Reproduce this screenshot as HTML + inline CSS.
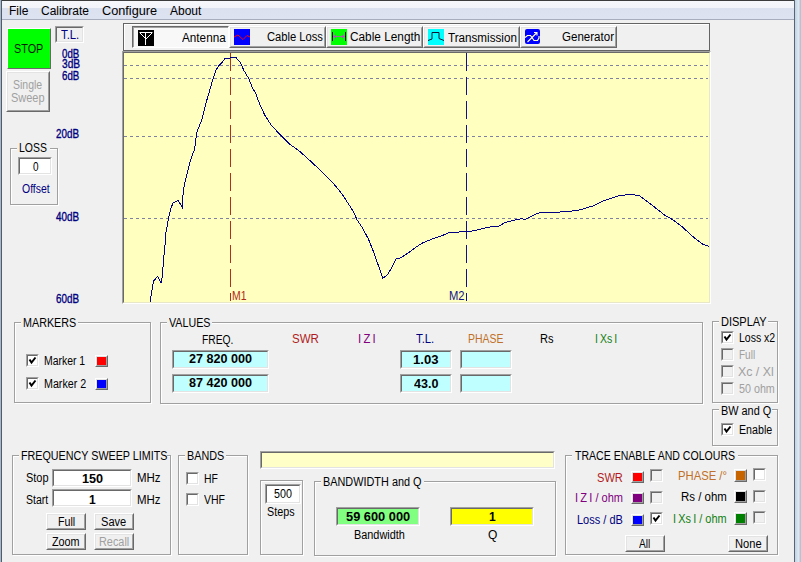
<!DOCTYPE html>
<html><head><meta charset="utf-8"><style>
html,body{margin:0;padding:0;}
body{width:801px;height:562px;overflow:hidden;background:#f0f0f0;position:relative;font-family:"Liberation Sans",sans-serif;font-size:11px;color:#000;}
.a{position:absolute;}
.t{position:absolute;white-space:nowrap;line-height:20px;height:20px;transform-origin:0 0;}
.grp{position:absolute;border:1px solid #a0a0a0;box-shadow:inset 1px 1px 0 #fff,1px 1px 0 #fff;box-sizing:border-box;}
.gb{position:absolute;background:#f0f0f0;height:3px;}
.sunk{position:absolute;box-sizing:border-box;border-top:1px solid #a0a0a0;border-left:1px solid #a0a0a0;border-right:1px solid #fff;border-bottom:1px solid #fff;}
.sunk>div{position:absolute;left:0;top:0;right:0;bottom:0;border-top:1px solid #696969;border-left:1px solid #696969;border-right:1px solid #e3e3e3;border-bottom:1px solid #e3e3e3;}
.btn{position:absolute;box-sizing:border-box;border-top:1px solid #fff;border-left:1px solid #fff;border-right:1px solid #696969;border-bottom:1px solid #696969;background:#f0f0f0;}
.btn>div{position:absolute;left:0;top:0;right:0;bottom:0;border-right:1px solid #a0a0a0;border-bottom:1px solid #a0a0a0;border-top:1px solid #e3e3e3;border-left:1px solid #e3e3e3;}
.cb{position:absolute;width:13px;height:13px;box-sizing:border-box;border-top:1px solid #a0a0a0;border-left:1px solid #a0a0a0;border-right:1px solid #fff;border-bottom:1px solid #fff;}
.cb>div{position:absolute;left:0;top:0;right:0;bottom:0;border-top:1px solid #696969;border-left:1px solid #696969;border-right:1px solid #e3e3e3;border-bottom:1px solid #e3e3e3;background:#fff;}
.cb.dis>div{background:#f0f0f0;}
.sw{position:absolute;width:13px;height:13px;box-sizing:border-box;border-top:1px solid #fff;border-left:1px solid #fff;border-right:1px solid #696969;border-bottom:1px solid #696969;}
.sw>div{position:absolute;left:0;top:0;right:0;bottom:0;border-right:1px solid #a0a0a0;border-bottom:1px solid #a0a0a0;border-top:1px solid #e3e3e3;border-left:1px solid #e3e3e3;}
</style></head><body>
<!-- window frame -->
<div class="a" style="left:0;top:0;width:801px;height:1px;background:#3c3c3c"></div>
<div class="a" style="left:0;top:0;width:1px;height:562px;background:#a8b8c8"></div>
<div class="a" style="left:1px;top:0;width:1px;height:562px;background:#505c6c"></div>
<div class="a" style="left:794px;top:0;width:1px;height:562px;background:#5a6470"></div>
<div class="a" style="left:795px;top:0;width:6px;height:562px;background:linear-gradient(90deg,#c0d4e4,#dce8f2 60%,#a8bccc)"></div>

<!-- menu bar -->
<div class="a" style="left:2px;top:1px;width:792px;height:18px;background:linear-gradient(#f6f7fb 0,#f2f4f9 7px,#dbe1ef 7px,#dde3f0 18px)"></div>
<div class="a" style="left:2px;top:19px;width:792px;height:1px;background:#a7adbd"></div>

<!-- left controls -->
<div class="a" style="left:7px;top:28px;width:44px;height:41px;box-sizing:border-box;background:#00ff00;border-top:1px solid #fff;border-left:1px solid #fff;border-right:1px solid #696969;border-bottom:1px solid #696969"></div>
<div class="btn" style="left:6px;top:71px;width:44px;height:41px"><div></div></div>
<div class="sunk" style="left:55px;top:26px;width:29px;height:17px"><div></div></div>

<div class="grp" style="left:10px;top:148px;width:48px;height:57px"></div>
<div class="gb" style="left:17px;top:147px;width:33px"></div>
<div class="sunk" style="left:18px;top:157px;width:34px;height:18px;background:#fff"><div></div></div>

<!-- toolbar -->
<div class="a" style="left:123px;top:23px;width:587px;height:28px;box-sizing:border-box;border:1px solid #646464;box-shadow:inset 1px 1px 0 #fff"></div>
<div class="a" style="left:132px;top:26px;width:97px;height:22px;box-sizing:border-box;border-top:1px solid #696969;border-left:1px solid #696969;border-right:1px solid #fff;border-bottom:1px solid #fff;background:#f8f8f8"><div class="a" style="left:0;top:0;right:0;bottom:0;border-top:1px solid #a0a0a0;border-left:1px solid #a0a0a0"></div></div>
<div class="a" style="left:138px;top:30px;width:16px;height:16px;background:#000"><svg width="16" height="16" style="position:absolute;left:0;top:0"><path d="M1.5 2.5H14.5M2 3L8 9M14 3L8 9M7.5 2.5V15" stroke="#fff" stroke-width="1" fill="none"/></svg></div>

<div class="btn" style="left:229px;top:26px;width:97px;height:22px"><div></div></div>
<div class="a" style="left:234px;top:29px;width:16px;height:16px;background:#0000ff"><svg width="16" height="16" style="position:absolute;left:0;top:0"><path d="M0 8L4 6L9 10.5L13 6.5L16 8" stroke="#ff0000" stroke-width="1" fill="none"/></svg></div>

<div class="btn" style="left:326px;top:26px;width:97px;height:22px"><div></div></div>
<div class="a" style="left:331px;top:29px;width:16px;height:16px;background:#00ff00"><svg width="16" height="16" style="position:absolute;left:0;top:0"><path d="M1.5 3V12M14.5 3V12" stroke="#000" stroke-width="1" fill="none"/><path d="M3 7.5H13" stroke="#a060a0" stroke-width="1"/><path d="M2 7.5L5 5.5V9.5Z M14 7.5L11 5.5V9.5Z" fill="#b050c0"/></svg></div>

<div class="btn" style="left:423px;top:26px;width:97px;height:22px"><div></div></div>
<div class="a" style="left:428px;top:29px;width:16px;height:16px;background:#00ffff"><svg width="16" height="16" style="position:absolute;left:0;top:0"><path d="M0 11.5L4 10V3.5H11V9.5L16 11.5" stroke="#101030" stroke-width="1" fill="none"/></svg></div>

<div class="btn" style="left:520px;top:26px;width:97px;height:22px"><div></div></div>
<div class="a" style="left:525px;top:29px;width:15px;height:15px;background:#0000ff;border-radius:2px"><svg width="16" height="16" style="position:absolute;left:0;top:0"><path d="M0 8.5L2.5 6.5H5.5L8 10L9 11.5H12.5L14 9V7" stroke="#ffffc0" stroke-width="1.2" fill="none"/><path d="M2.5 13L11.5 4M9 3.5H12V6.5" stroke="#ffffe0" stroke-width="1.1" fill="none"/></svg></div>

<!-- plot -->
<div class="a" style="left:122px;top:51px;width:589px;height:253px;box-sizing:border-box;border-top:1px solid #a0a0a0;border-left:1px solid #a0a0a0;border-right:1px solid #fff;border-bottom:1px solid #fff;">
 <div class="a" style="left:0;top:0;right:0;bottom:0;border-top:1px solid #696969;border-left:1px solid #696969;border-right:1px solid #e8e8c8;border-bottom:1px solid #e8e8c8;background:#ffffc0"></div>
</div>
<svg class="a" style="left:0;top:0" width="801" height="562">
 <g stroke="#8080a0" stroke-width="1" stroke-dasharray="3 3">
  <path d="M124 65.5H708M124 78.5H708M124 136.5H708M124 218.5H708"/>
 </g>
 <path d="M230.5 53V301" stroke="#b03020" stroke-width="1" stroke-dasharray="18 6"/>
 <path d="M466.5 53V301" stroke="#10108a" stroke-width="1" stroke-dasharray="18 6"/>
 <polyline fill="none" shape-rendering="crispEdges" stroke="#000080" stroke-width="1" points="150.2,301.8 151.1,295.4 152.1,289.7 153.5,281.2 157.8,276.2 161,283.3 162,278.4 162.8,269.8 163.5,259.9 164.9,247 165.6,235.7 166.3,230 166.7,229 168.5,218.3 170.6,209.4 172.9,203.2 178.3,200.5 182.3,207.3 183.2,191.6 184.1,186.3 185.9,178.3 188,170.2 190.7,159.6 192.5,154.2 194.5,150 196.6,133.6 198.4,128.3 202,119.4 206.4,101.6 209,92.7 212.6,80.2 216.2,69.6 219.3,65 221.9,62.6 225.1,58.3 230.5,58 235.8,57.3 240.6,62.8 243.8,70.3 248.7,78.5 252.2,87.4 255.8,93.6 259.4,103.4 264.7,115 270.9,124.7 281.6,136.3 286.9,141.6 290,144.4 298.9,150.7 306.9,157.8 319.4,169.4 332.7,182.7 341.6,193.4 353.2,211.2 356.7,219.2 362,227.2 368.3,238.8 373.1,250.7 378.5,265.8 382.9,278.3 387.4,274.7 391.8,267.6 396.3,258.7 400.7,257.8 408.7,252.5 415.8,247.2 423,242.7 431.9,239.1 437.2,237.4 444.3,234.7 449.7,232.4 466.7,231.7 474.5,230.6 487.9,227.2 499.2,226.1 504.4,222.7 514.9,220.1 520.9,218.7 525.4,219.3 535.9,214.2 538.9,213 556.9,212.7 562.7,211.4 576.5,210.8 592.5,206.1 603.1,200.8 620,195.5 630.7,194.4 639.2,195.5 647.7,201.8 664.6,215 673.1,219.9 681.6,226.3 694.4,237.9 702.9,244.3 708.8,246.4"/>
</svg>

<!-- MARKERS -->
<div class="grp" style="left:14px;top:322px;width:137px;height:81px"></div>
<div class="gb" style="left:21px;top:321px;width:57px"></div>
<div class="cb" style="left:26px;top:354px"><div></div></div>
<svg class="a" style="left:26px;top:354px" width="13" height="13"><path d="M3.5 5.5L5.5 8.5L9.5 3.5" stroke="#000" stroke-width="2" fill="none"/></svg>
<div class="sw" style="left:95px;top:355px;height:12px"><div style="background:#ff0000"></div></div>
<div class="cb" style="left:26px;top:377px"><div></div></div>
<svg class="a" style="left:26px;top:377px" width="13" height="13"><path d="M3.5 5.5L5.5 8.5L9.5 3.5" stroke="#000" stroke-width="2" fill="none"/></svg>
<div class="sw" style="left:95px;top:378px;height:12px"><div style="background:#0000ff"></div></div>

<!-- VALUES -->
<div class="grp" style="left:160px;top:322px;width:543px;height:82px"></div>
<div class="gb" style="left:167px;top:321px;width:45px"></div>
<div class="sunk" style="left:172px;top:350px;width:97px;height:19px;background:#c0ffff"><div></div></div>
<div class="sunk" style="left:172px;top:374px;width:97px;height:19px;background:#c0ffff"><div></div></div>
<div class="sunk" style="left:400px;top:350px;width:52px;height:19px;background:#c0ffff"><div></div></div>
<div class="sunk" style="left:400px;top:374px;width:52px;height:19px;background:#c0ffff"><div></div></div>
<div class="sunk" style="left:460px;top:350px;width:52px;height:19px;background:#c0ffff"><div></div></div>
<div class="sunk" style="left:460px;top:374px;width:52px;height:19px;background:#c0ffff"><div></div></div>

<!-- DISPLAY -->
<div class="grp" style="left:712px;top:321px;width:66px;height:82px"></div>
<div class="gb" style="left:719px;top:320px;width:49px"></div>
<div class="cb" style="left:721px;top:331px"><div></div></div>
<svg class="a" style="left:721px;top:331px" width="13" height="13"><path d="M3.5 5.5L5.5 8.5L9.5 3.5" stroke="#000" stroke-width="2" fill="none"/></svg>
<div class="cb dis" style="left:721px;top:348px"><div></div></div>
<div class="cb dis" style="left:721px;top:365px"><div></div></div>
<div class="cb dis" style="left:721px;top:382px"><div></div></div>

<!-- BW and Q -->
<div class="grp" style="left:712px;top:409px;width:66px;height:37px"></div>
<div class="gb" style="left:719px;top:408px;width:53px"></div>
<div class="cb" style="left:721px;top:423px"><div></div></div>
<svg class="a" style="left:721px;top:423px" width="13" height="13"><path d="M3.5 5.5L5.5 8.5L9.5 3.5" stroke="#000" stroke-width="2" fill="none"/></svg>

<!-- FREQUENCY SWEEP LIMITS -->
<div class="grp" style="left:12px;top:455px;width:159px;height:100px"></div>
<div class="gb" style="left:19px;top:454px;width:148px"></div>
<div class="sunk" style="left:52px;top:469px;width:80px;height:18px;background:#fff"><div></div></div>
<div class="sunk" style="left:52px;top:489px;width:80px;height:18px;background:#fff"><div></div></div>
<div class="btn" style="left:46px;top:513px;width:40px;height:17px"><div></div></div>
<div class="btn" style="left:94px;top:513px;width:40px;height:17px"><div></div></div>
<div class="btn" style="left:46px;top:533px;width:40px;height:17px"><div></div></div>
<div class="btn" style="left:94px;top:533px;width:40px;height:17px"><div></div></div>

<!-- BANDS -->
<div class="grp" style="left:178px;top:455px;width:70px;height:100px"></div>
<div class="gb" style="left:185px;top:454px;width:41px"></div>
<div class="cb" style="left:186px;top:472px"><div></div></div>
<div class="cb" style="left:186px;top:493px"><div></div></div>

<!-- status bar -->
<div class="sunk" style="left:260px;top:451px;width:295px;height:18px;background:#ffffc8"><div></div></div>

<!-- steps -->
<div class="grp" style="left:260px;top:480px;width:43px;height:75px"></div>
<div class="sunk" style="left:265px;top:484px;width:36px;height:20px;background:#fff"><div></div></div>

<!-- BANDWIDTH and Q -->
<div class="grp" style="left:314px;top:481px;width:242px;height:75px"></div>
<div class="gb" style="left:321px;top:480px;width:103px"></div>
<div class="sunk" style="left:336px;top:507px;width:84px;height:19px;background:#80ff80"><div></div></div>
<div class="sunk" style="left:450px;top:507px;width:84px;height:19px;background:#ffff00"><div></div></div>

<!-- TRACE -->
<div class="grp" style="left:565px;top:455px;width:213px;height:100px"></div>
<div class="gb" style="left:572px;top:454px;width:166px"></div>
<div class="sw" style="left:631px;top:471px;height:12px"><div style="background:#ff0000"></div></div>
<div class="cb" style="left:650px;top:469px"><div style="background:#f0f0f0"></div></div>
<div class="sw" style="left:734px;top:469px;height:13px"><div style="background:#c86400"></div></div>
<div class="cb" style="left:753px;top:468px"><div></div></div>
<div class="sw" style="left:631px;top:492px;height:12px"><div style="background:#800080"></div></div>
<div class="cb" style="left:650px;top:491px"><div style="background:#f0f0f0"></div></div>
<div class="sw" style="left:734px;top:490px;height:13px"><div style="background:#000"></div></div>
<div class="cb" style="left:753px;top:490px"><div style="background:#f0f0f0"></div></div>
<div class="sw" style="left:631px;top:514px;height:12px"><div style="background:#0000ff"></div></div>
<div class="cb" style="left:650px;top:512px"><div></div></div>
<svg class="a" style="left:650px;top:512px" width="13" height="13"><path d="M3.5 5.5L5.5 8.5L9.5 3.5" stroke="#000" stroke-width="2" fill="none"/></svg>
<div class="sw" style="left:734px;top:512px;height:13px"><div style="background:#008000"></div></div>
<div class="cb" style="left:753px;top:511px"><div style="background:#f0f0f0"></div></div>
<div class="btn" style="left:625px;top:535px;width:40px;height:17px"><div></div></div>
<div class="btn" style="left:728px;top:535px;width:40px;height:17px"><div></div></div>

<div class='t' style='left:9px;top:1px;font-size:12px;font-weight:400;color:#000;transform:scaleX(1.0);'>File</div>
<div class='t' style='left:41px;top:1px;font-size:12px;font-weight:400;color:#000;transform:scaleX(1.0);'>Calibrate</div>
<div class='t' style='left:102px;top:1px;font-size:12px;font-weight:400;color:#000;transform:scaleX(1.06);'>Configure</div>
<div class='t' style='left:170px;top:1px;font-size:12px;font-weight:400;color:#000;transform:scaleX(1.0);'>About</div>
<div class='t' style='left:14px;top:39px;font-size:12px;font-weight:400;color:#002000;transform:scaleX(0.9032);'>STOP</div>
<div class='t' style='left:13px;top:75px;font-size:12px;font-weight:400;color:#a0a0a0;transform:scaleX(0.875);'>Single</div>
<div class='t' style='left:11px;top:88px;font-size:12px;font-weight:400;color:#a0a0a0;transform:scaleX(0.9143);'>Sweep</div>
<div class='t' style='left:61px;top:25px;font-size:12px;font-weight:400;color:#000080;transform:scaleX(0.9444);'>T.L.</div>
<div class='t' style='left:62px;top:44px;font-size:12px;font-weight:400;color:#000080;transform:scaleX(0.8095);-webkit-text-stroke:0.35px #000080'>0dB</div>
<div class='t' style='left:62px;top:54px;font-size:12px;font-weight:400;color:#000080;transform:scaleX(0.85);-webkit-text-stroke:0.35px #000080'>3dB</div>
<div class='t' style='left:62px;top:66px;font-size:12px;font-weight:400;color:#000080;transform:scaleX(0.8095);-webkit-text-stroke:0.35px #000080'>6dB</div>
<div class='t' style='left:56px;top:124px;font-size:12px;font-weight:400;color:#000080;transform:scaleX(0.8214);-webkit-text-stroke:0.35px #000080'>20dB</div>
<div class='t' style='left:56px;top:207px;font-size:12px;font-weight:400;color:#000080;transform:scaleX(0.8214);-webkit-text-stroke:0.35px #000080'>40dB</div>
<div class='t' style='left:56px;top:289px;font-size:12px;font-weight:400;color:#000080;transform:scaleX(0.8214);-webkit-text-stroke:0.35px #000080'>60dB</div>
<div class='t' style='left:19px;top:138px;font-size:12px;font-weight:400;color:#000;transform:scaleX(0.871);'>LOSS</div>
<div class='t' style='left:33px;top:157px;font-size:12px;font-weight:400;color:#000;transform:scaleX(0.8333);'>0</div>
<div class='t' style='left:22px;top:179px;font-size:12px;font-weight:400;color:#000080;transform:scaleX(0.871);'>Offset</div>
<div class='t' style='left:182px;top:28px;font-size:12px;font-weight:400;color:#000;transform:scaleX(0.9778);'>Antenna</div>
<div class='t' style='left:267px;top:27px;font-size:12px;font-weight:400;color:#000;transform:scaleX(0.9322);'>Cable Loss</div>
<div class='t' style='left:350px;top:27px;font-size:12px;font-weight:400;color:#000;transform:scaleX(0.9857);'>Cable Length</div>
<div class='t' style='left:448px;top:28px;font-size:12px;font-weight:400;color:#000;transform:scaleX(0.9714);'>Transmission</div>
<div class='t' style='left:562px;top:27px;font-size:12px;font-weight:400;color:#000;transform:scaleX(0.9623);'>Generator</div>
<div class='t' style='left:232px;top:286px;font-size:12px;font-weight:400;color:#b02818;transform:scaleX(0.8667);'>M1</div>
<div class='t' style='left:449px;top:286px;font-size:12px;font-weight:400;color:#10108a;transform:scaleX(0.9333);'>M2</div>
<div class='t' style='left:23px;top:313px;font-size:12px;font-weight:400;color:#000;transform:scaleX(0.8966);'>MARKERS</div>
<div class='t' style='left:44px;top:351px;font-size:12px;font-weight:400;color:#000;transform:scaleX(0.8696);'>Marker 1</div>
<div class='t' style='left:44px;top:374px;font-size:12px;font-weight:400;color:#000;transform:scaleX(0.8913);'>Marker 2</div>
<div class='t' style='left:169px;top:313px;font-size:12px;font-weight:400;color:#000;transform:scaleX(0.8913);'>VALUES</div>
<div class='t' style='left:202px;top:330px;font-size:12px;font-weight:400;color:#000;transform:scaleX(0.8571);'>FREQ.</div>
<div class='t' style='left:292px;top:329px;font-size:12px;font-weight:400;color:#b01c1c;transform:scaleX(0.9615);'>SWR</div>
<div class='t' style='left:358px;top:329px;font-size:12px;font-weight:400;color:#800080;transform:scaleX(0.9412);'>I&#8201;Z&#8201;I</div>
<div class='t' style='left:416px;top:329px;font-size:12px;font-weight:400;color:#000080;transform:scaleX(0.9444);'>T.L.</div>
<div class='t' style='left:468px;top:329px;font-size:12px;font-weight:400;color:#c07028;transform:scaleX(0.8718);'>PHASE</div>
<div class='t' style='left:540px;top:329px;font-size:12px;font-weight:400;color:#000;transform:scaleX(0.9231);'>Rs</div>
<div class='t' style='left:595px;top:329px;font-size:12px;font-weight:400;color:#108010;transform:scaleX(0.875);'>I&#8201;Xs&#8201;I</div>
<div class='t' style='left:189px;top:349px;font-size:12px;font-weight:700;color:#000;transform:scaleX(1.05);'>27 820 000</div>
<div class='t' style='left:189px;top:373px;font-size:12px;font-weight:700;color:#000;transform:scaleX(1.05);'>87 420 000</div>
<div class='t' style='left:413px;top:350px;font-size:12px;font-weight:700;color:#000;transform:scaleX(1.0909);'>1.03</div>
<div class='t' style='left:414px;top:374px;font-size:12px;font-weight:700;color:#000;transform:scaleX(1.0435);'>43.0</div>
<div class='t' style='left:721px;top:312px;font-size:12px;font-weight:400;color:#000;transform:scaleX(0.9167);'>DISPLAY</div>
<div class='t' style='left:739px;top:328px;font-size:12px;font-weight:400;color:#000;transform:scaleX(0.875);'>Loss x2</div>
<div class='t' style='left:739px;top:345px;font-size:12px;font-weight:400;color:#a0a0a0;transform:scaleX(0.8333);'>Full</div>
<div class='t' style='left:738px;top:362px;font-size:12px;font-weight:400;color:#a0a0a0;transform:scaleX(1.0303);'>Xc / Xl</div>
<div class='t' style='left:739px;top:379px;font-size:12px;font-weight:400;color:#a0a0a0;transform:scaleX(0.8947);'>50 ohm</div>
<div class='t' style='left:721px;top:401px;font-size:12px;font-weight:400;color:#000;transform:scaleX(0.9074);'>BW and Q</div>
<div class='t' style='left:739px;top:420px;font-size:12px;font-weight:400;color:#000;transform:scaleX(0.8889);'>Enable</div>
<div class='t' style='left:21px;top:446px;font-size:12px;font-weight:400;color:#000;transform:scaleX(0.8951);'>FREQUENCY SWEEP LIMITS</div>
<div class='t' style='left:26px;top:468px;font-size:12px;font-weight:400;color:#000;transform:scaleX(0.913);'>Stop</div>
<div class='t' style='left:26px;top:490px;font-size:12px;font-weight:400;color:#000;transform:scaleX(0.875);'>Start</div>
<div class='t' style='left:82px;top:469px;font-size:12px;font-weight:700;color:#000;transform:scaleX(1.0526);'>150</div>
<div class='t' style='left:89px;top:490px;font-size:12px;font-weight:700;color:#000;transform:scaleX(1.0);'>1</div>
<div class='t' style='left:137px;top:468px;font-size:12px;font-weight:400;color:#000;transform:scaleX(0.9565);'>MHz</div>
<div class='t' style='left:137px;top:490px;font-size:12px;font-weight:400;color:#000;transform:scaleX(0.9565);'>MHz</div>
<div class='t' style='left:58px;top:512px;font-size:12px;font-weight:400;color:#000;transform:scaleX(0.8889);'>Full</div>
<div class='t' style='left:101px;top:512px;font-size:12px;font-weight:400;color:#000;transform:scaleX(0.9231);'>Save</div>
<div class='t' style='left:52px;top:532px;font-size:12px;font-weight:400;color:#000;transform:scaleX(0.9);'>Zoom</div>
<div class='t' style='left:99px;top:532px;font-size:12px;font-weight:400;color:#a0a0a0;transform:scaleX(0.9062);'>Recall</div>
<div class='t' style='left:187px;top:446px;font-size:12px;font-weight:400;color:#000;transform:scaleX(0.9);'>BANDS</div>
<div class='t' style='left:204px;top:469px;font-size:12px;font-weight:400;color:#000;transform:scaleX(0.8667);'>HF</div>
<div class='t' style='left:204px;top:490px;font-size:12px;font-weight:400;color:#000;transform:scaleX(0.875);'>VHF</div>
<div class='t' style='left:274px;top:484px;font-size:12px;font-weight:400;color:#000;transform:scaleX(0.8947);'>500</div>
<div class='t' style='left:267px;top:502px;font-size:12px;font-weight:400;color:#000;transform:scaleX(0.8966);'>Steps</div>
<div class='t' style='left:323px;top:472px;font-size:12px;font-weight:400;color:#000;transform:scaleX(0.9065);'>BANDWIDTH and Q</div>
<div class='t' style='left:346px;top:507px;font-size:12px;font-weight:700;color:#000;transform:scaleX(1.0678);'>59 600 000</div>
<div class='t' style='left:354px;top:525px;font-size:12px;font-weight:400;color:#000;transform:scaleX(0.9074);'>Bandwidth</div>
<div class='t' style='left:489px;top:507px;font-size:12px;font-weight:700;color:#000;transform:scaleX(1.0);'>1</div>
<div class='t' style='left:488px;top:525px;font-size:12px;font-weight:400;color:#000;transform:scaleX(1.0);'>Q</div>
<div class='t' style='left:575px;top:446px;font-size:12px;font-weight:400;color:#000;transform:scaleX(0.8791);'>TRACE ENABLE AND COLOURS</div>
<div class='t' style='left:597px;top:468px;font-size:12px;font-weight:400;color:#b01c1c;transform:scaleX(0.9231);'>SWR</div>
<div class='t' style='left:575px;top:488px;font-size:12px;font-weight:400;color:#800080;transform:scaleX(0.9216);'>I&#8201;Z&#8201;I / ohm</div>
<div class='t' style='left:577px;top:510px;font-size:12px;font-weight:400;color:#000080;transform:scaleX(0.9167);'>Loss / dB</div>
<div class='t' style='left:678px;top:466px;font-size:12px;font-weight:400;color:#c07028;transform:scaleX(0.94);'>PHASE /&deg;</div>
<div class='t' style='left:681px;top:487px;font-size:12px;font-weight:400;color:#000;transform:scaleX(0.9565);'>Rs / ohm</div>
<div class='t' style='left:673px;top:509px;font-size:12px;font-weight:400;color:#108010;transform:scaleX(0.9123);'>I&#8201;Xs&#8201;I / ohm</div>
<div class='t' style='left:639px;top:534px;font-size:12px;font-weight:400;color:#000;transform:scaleX(0.8462);'>All</div>
<div class='t' style='left:735px;top:534px;font-size:12px;font-weight:400;color:#000;transform:scaleX(0.9259);'>None</div>
</body></html>
